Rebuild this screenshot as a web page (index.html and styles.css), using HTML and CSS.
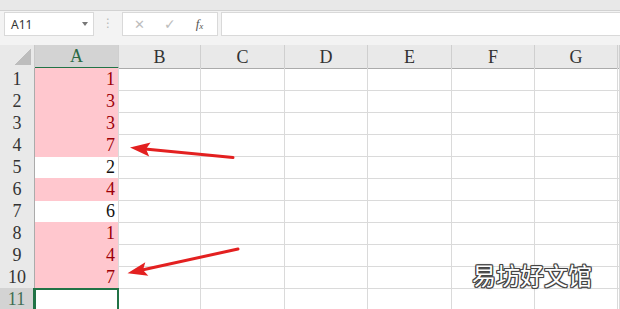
FILE: index.html
```html
<!DOCTYPE html>
<html lang="zh-CN">
<head>
    <meta charset="UTF-8">
    <title>工作表</title>
    <link rel="stylesheet" href="styles.css">
</head>
<body>
    <div class="ribbon-edge"></div>

    <div class="formula-bar">
        <div class="name-box"><span>A11</span><i class="caret"></i></div>
        <div class="grip">⋮</div>
        <div class="fx-buttons">
            <span class="btn-cancel">✕</span>
            <span class="btn-enter">✓</span>
            <span class="btn-fx">f<sub>x</sub></span>
        </div>
        <div class="formula-input"></div>
    </div>

    <div class="sheet" id="sheet">
        <div class="row head-row">
            <div class="corner"><i></i></div>
            <div class="col-head active">A</div>
            <div class="col-head">B</div>
            <div class="col-head">C</div>
            <div class="col-head">D</div>
            <div class="col-head">E</div>
            <div class="col-head">F</div>
            <div class="col-head">G</div>
            <div class="col-head"></div>
        </div>
    </div>

    <svg class="arrows" width="620" height="309" viewBox="0 0 620 309">
        <line x1="233" y1="157.5" x2="145" y2="149" stroke="#e32020" stroke-width="3" stroke-linecap="round"/>
        <polygon points="130,147.5 150.6,142.5 146,149.1 149.2,156.5" fill="#e32020"/>
        <line x1="238" y1="249" x2="142" y2="270" stroke="#e32020" stroke-width="3" stroke-linecap="round"/>
        <polygon points="127.5,273.3 145.3,262.2 143,269.9 148.3,275.8" fill="#e32020"/>
    </svg>

    <div class="watermark">易坊好文馆</div>

    <script>
        const values = [1, 3, 3, 7, 2, 4, 6, 1, 4, 7];
        const sheet = document.getElementById('sheet');

        function countOf(v) {
            return values.filter(x => x === v).length;
        }

        for (let r = 1; r <= 11; r++) {
            const row = document.createElement('div');
            row.className = 'row';

            const head = document.createElement('div');
            head.className = 'row-head' + (r === 11 ? ' active' : '');
            head.textContent = r;
            row.appendChild(head);

            for (let c = 0; c < 8; c++) {
                const cell = document.createElement('div');
                cell.className = 'cell';
                if (c === 0) {
                    const v = values[r - 1];
                    if (v !== undefined) {
                        cell.textContent = v;
                        cell.classList.add('num');
                        if (countOf(v) > 1) cell.classList.add('dup');
                    }
                    if (r === 11) cell.classList.add('selected');
                }
                row.appendChild(cell);
            }
            sheet.appendChild(row);
        }
    </script>
</body>
</html>
```

FILE: styles.css
```css
body {
    margin: 0;
    width: 620px;
    height: 309px;
    overflow: hidden;
    position: relative;
    background: #fff;
    font-family: "Liberation Serif", "Times New Roman", serif;
}
.ribbon-edge {
    height: 10px;
    background: #e8e8e8;
    border-bottom: 1px solid #d2d2d2;
}
.formula-bar {
    display: flex;
    align-items: flex-start;
    height: 34px;
    padding: 1px 0 0 4px;
    box-sizing: border-box;
    background: #f3f3f3;
}
.name-box, .fx-buttons, .formula-input {
    height: 24px;
    box-sizing: border-box;
    background: #fff;
    border: 1px solid #d9d9d9;
}
.name-box {
    width: 90px;
    display: flex;
    align-items: center;
    padding: 0 5px 0 6px;
    font-family: "Noto Sans", sans-serif;
    font-size: 12px;
    color: #333;
}
.caret {
    margin-left: auto;
    width: 0;
    height: 0;
    border-left: 3px solid transparent;
    border-right: 3px solid transparent;
    border-top: 4px solid #777;
}
.grip {
    width: 28px;
    text-align: center;
    line-height: 22px;
    font-family: "DejaVu Sans", sans-serif;
    font-size: 12px;
    color: #b8b8b8;
}
.fx-buttons {
    width: 96px;
    display: flex;
    align-items: center;
    font-family: "DejaVu Sans", sans-serif;
    color: #bdbdbd;
}
.btn-cancel {
    margin-left: 11px;
    font-size: 13px;
}
.btn-enter {
    margin-left: 19px;
    font-size: 14px;
}
.btn-fx {
    margin-left: 20px;
    font-family: "Liberation Serif", serif;
    font-style: italic;
    font-size: 13px;
    color: #555;
}
.btn-fx sub {
    font-size: 9px;
    vertical-align: -1px;
}
.formula-input {
    flex: 1;
    margin-left: 3px;
    border-right: none;
}
.row {
    display: grid;
    grid-template-columns: 35px 84px 82px 84px 83px 84px 83px 83px 2px;
    height: 22px;
}
.head-row {
    height: 23px;
    margin-top: 0;
}
.sheet {
    border-top: 0;
}
.corner, .col-head, .row-head {
    background: #e9e9e9;
    color: #333;
    box-sizing: border-box;
    display: flex;
    align-items: center;
    justify-content: center;
    font-size: 18px;
}
.corner {
    border-right: 1px solid #c9c9c9;
    border-bottom: 1px solid #ababab;
    align-items: flex-end;
    justify-content: flex-end;
    padding: 0 3px 3px 0;
}
.corner i {
    width: 17px;
    height: 16px;
    background: linear-gradient(to bottom right, transparent 50%, #bdbdbd 50%);
}
.col-head {
    border-right: 1px solid #cfcfcf;
    border-bottom: 1px solid #ababab;
    padding-top: 1px;
}
.col-head.active {
    background: #d3d3d3;
    color: #2b6a45;
    border-bottom: 2px solid #217346;
}
.row-head {
    border-right: 1px solid #ababab;
    border-bottom: 1px solid #d0d0d0;
    padding-top: 1px;
}
.row-head.active {
    background: #d3d3d3;
    color: #3f6e52;
    border-right: 2px solid #217346;
}
.cell {
    box-sizing: border-box;
    border-right: 1px solid #dadada;
    border-bottom: 1px solid #dadada;
    font-size: 18px;
    color: #111;
}
.num {
    display: flex;
    align-items: center;
    justify-content: flex-end;
    padding: 1px 3px 0 0;
}
.dup {
    background: #ffc7ce;
    color: #9c0006;
    border-bottom-color: #ffc7ce;
}
.selected {
    border: 2px solid #217346;
    margin-left: -1px;
}
.arrows {
    position: absolute;
    left: 0;
    top: 0;
    pointer-events: none;
}
.watermark {
    position: absolute;
    left: 472px;
    top: 259px;
    font-family: "Noto Sans CJK SC", sans-serif;
    font-size: 24px;
    line-height: 32px;
    color: #fff;
    text-shadow:
        1px 0 0 #444, -1px 0 0 #444, 0 1px 0 #444, 0 -1px 0 #444,
        1px 1px 0 #444, -1px -1px 0 #444, 1px -1px 0 #444, -1px 1px 0 #444,
        0 0 3px #999;
}
```
